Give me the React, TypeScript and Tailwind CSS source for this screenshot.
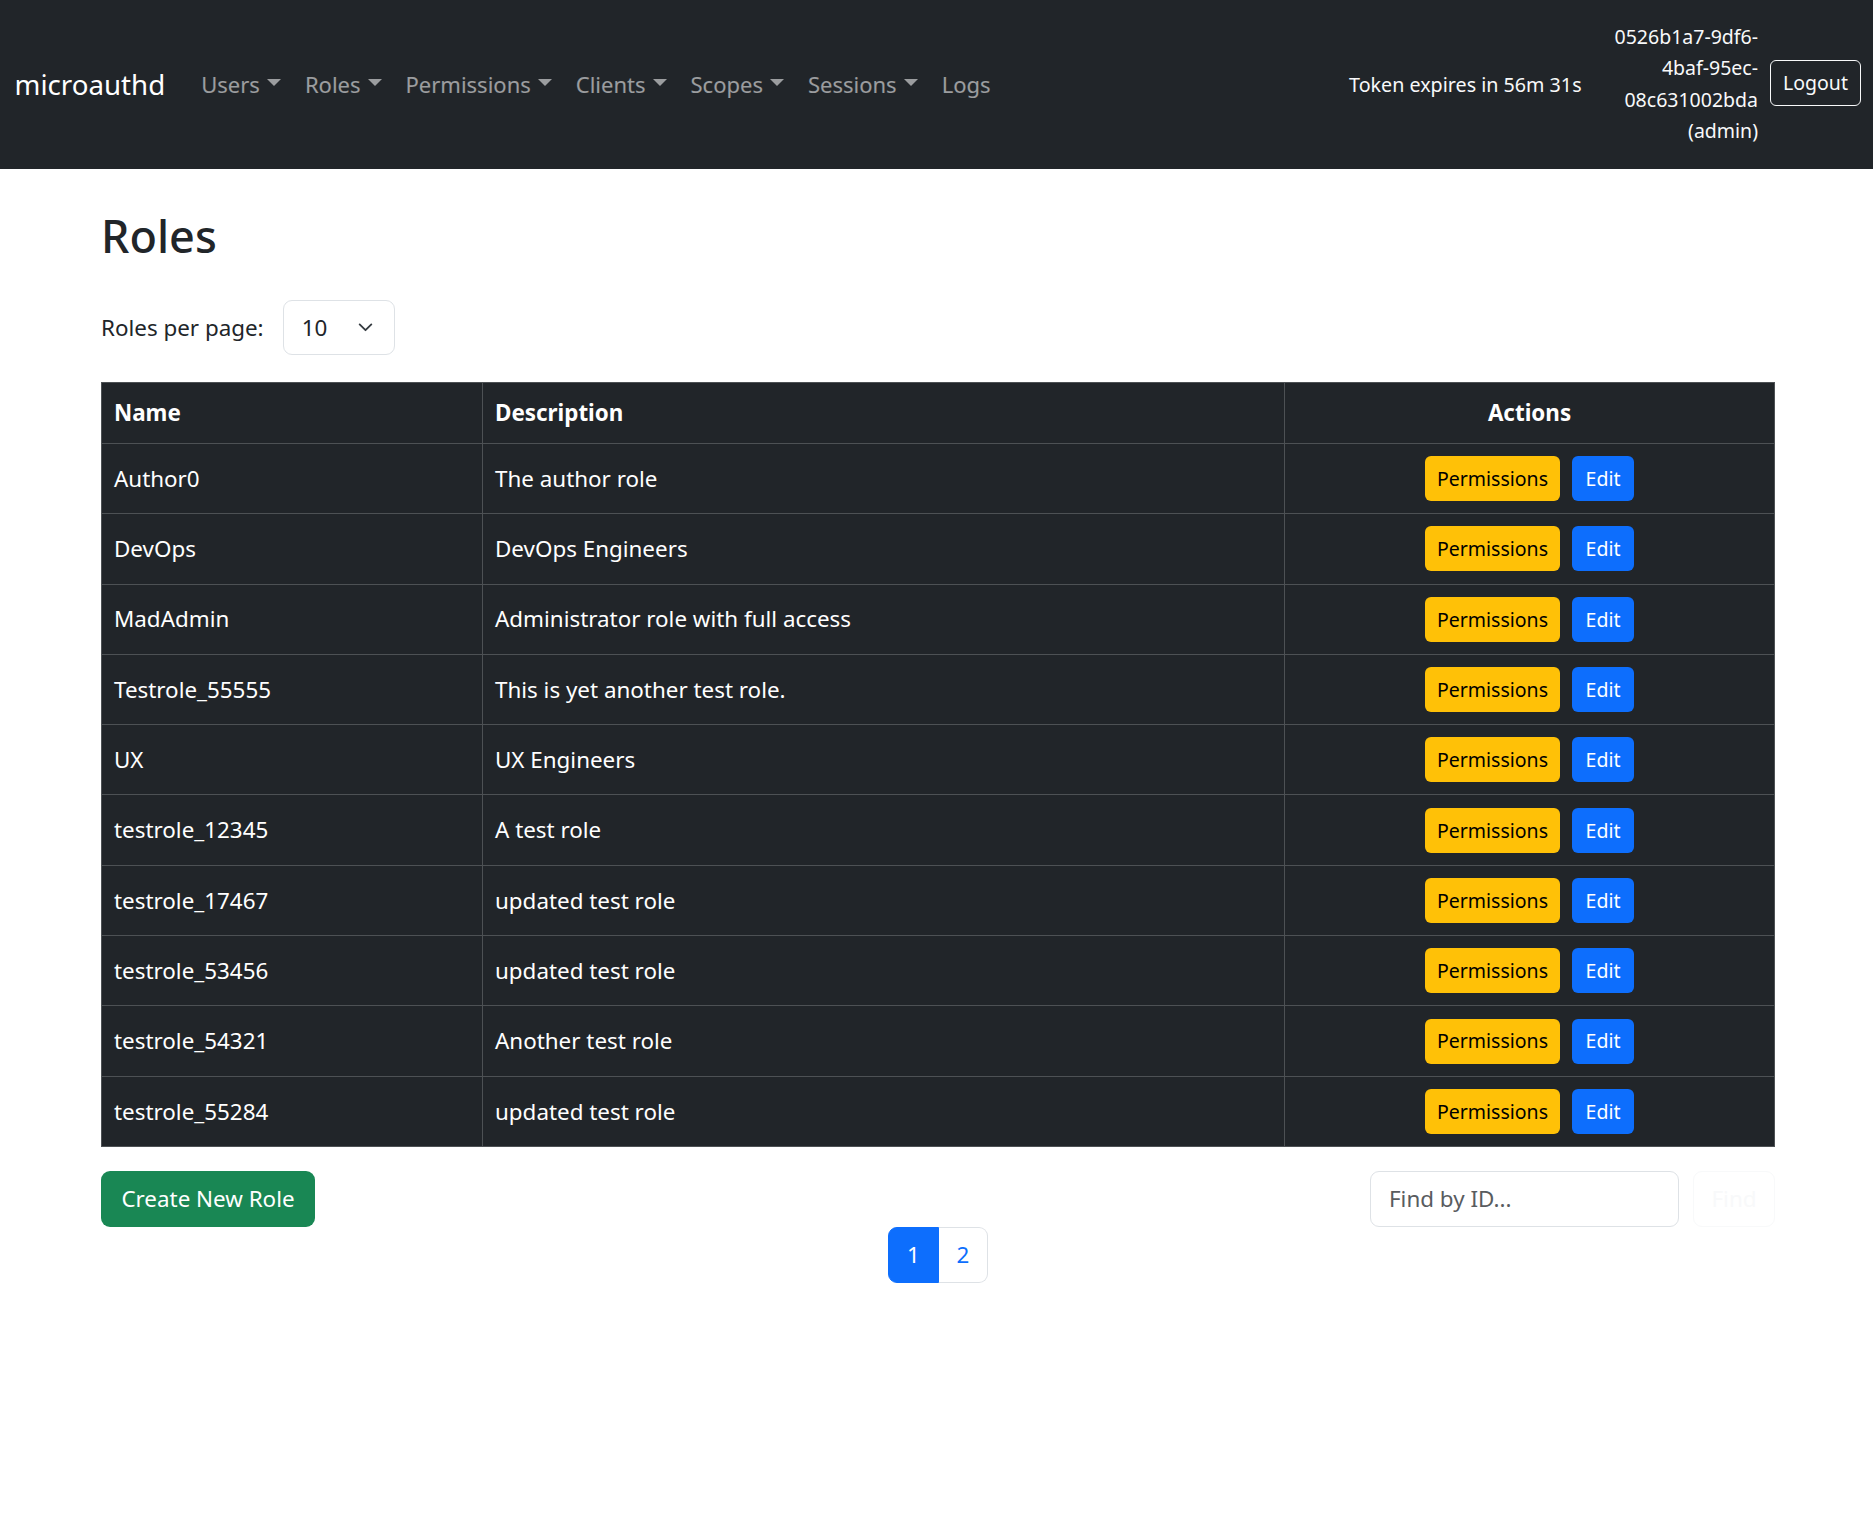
import React from "react";

const roles = [
  { name: "Author0", description: "The author role" },
  { name: "DevOps", description: "DevOps Engineers" },
  { name: "MadAdmin", description: "Administrator role with full access" },
  { name: "Testrole_55555", description: "This is yet another test role." },
  { name: "UX", description: "UX Engineers" },
  { name: "testrole_12345", description: "A test role" },
  { name: "testrole_17467", description: "updated test role" },
  { name: "testrole_53456", description: "updated test role" },
  { name: "testrole_54321", description: "Another test role" },
  { name: "testrole_55284", description: "updated test role" },
];

const navItems = [
  { label: "Users", caret: true },
  { label: "Roles", caret: true },
  { label: "Permissions", caret: true },
  { label: "Clients", caret: true },
  { label: "Scopes", caret: true },
  { label: "Sessions", caret: true },
  { label: "Logs", caret: false },
];

function Caret() {
  return (
    <span className="ml-[7px] mb-[5px] inline-block h-0 w-0 border-x-[7px] border-t-[7px] border-x-transparent border-t-current" />
  );
}

function Navbar() {
  return (
    <nav className="flex h-[169px] items-center bg-[#212529] pr-3 pl-[14.5px]">
      <a className="mr-6 text-[27.7px] leading-[1.5] text-white">microauthd</a>
      <ul className="flex items-center">
        {navItems.map((item) => (
          <li key={item.label}>
            <a className="flex items-center px-3 text-[22px] leading-[1.5] text-white/55">
              {item.label}
              {item.caret && <Caret />}
            </a>
          </li>
        ))}
      </ul>

      <div className="ml-auto flex items-center">
        <span className="mr-[33px] text-[19.7px] text-[#f8f9fa]">Token expires in 56m 31s</span>
        <div className="-mt-[2px] text-right text-[19.5px] leading-[31.5px] text-[#f8f9fa]">
          <div>0526b1a7-9df6-</div>
          <div>4baf-95ec-</div>
          <div>08c631002bda</div>
          <div>(admin)</div>
        </div>
        <button className="ml-3 -mt-[3px] h-[46px] w-[91px] rounded-[6px] border border-[#f8f9fa] text-[19.5px] text-[#f8f9fa]">
          Logout
        </button>
      </div>
    </nav>
  );
}

function RolesTable() {
  return (
    <table className="w-full table-fixed border-collapse bg-[#212529] text-[22.4px] text-white">
      <colgroup>
        <col className="w-[381px]" />
        <col className="w-[802px]" />
        <col />
      </colgroup>
      <thead>
        <tr className="h-[61px]">
          <th className="border border-[#4d5154] px-3 text-left font-bold">Name</th>
          <th className="border border-[#4d5154] px-3 text-left font-bold">Description</th>
          <th className="border border-[#4d5154] px-3 text-center font-bold">Actions</th>
        </tr>
      </thead>
      <tbody>
        {roles.map((role) => (
          <tr key={role.name} className="h-[70.3px]">
            <td className="border border-[#4d5154] px-3 align-middle">{role.name}</td>
            <td className="border border-[#4d5154] px-3 align-middle">{role.description}</td>
            <td className="border border-[#4d5154] px-3 align-middle">
              <div className="flex justify-center gap-3">
                <button className="h-[45px] w-[135px] rounded-[6px] bg-[#ffc107] text-[19.5px] text-black">
                  Permissions
                </button>
                <button className="h-[45px] w-[62px] rounded-[6px] bg-[#0d6efd] text-[19.5px] text-white">
                  Edit
                </button>
              </div>
            </td>
          </tr>
        ))}
      </tbody>
    </table>
  );
}

export default function App() {
  return (
    <div className="min-h-screen bg-white font-['Noto_Sans',sans-serif] text-[#212529]">
      <Navbar />

      <main className="ml-[101px] w-[1674px]">
        <h1 className="mt-[40px] mb-[37px] text-[45px] leading-[1.2] font-medium">Roles</h1>

        <div className="flex items-center gap-[19px]">
          <label className="text-[22.4px]">Roles per page:</label>
          <div className="flex h-[55px] w-[112px] items-center justify-between rounded-[9px] border border-[#dee2e6] pr-[21px] pl-[18px] text-[22.4px]">
            <span>10</span>
            <svg width="15" height="9" viewBox="0 0 16 10" fill="none">
              <path d="M1.5 1.5 L8 8 L14.5 1.5" stroke="#343a40" strokeWidth="2" strokeLinecap="round" strokeLinejoin="round" />
            </svg>
          </div>
        </div>

        <div className="mt-[27px]">
          <RolesTable />
        </div>

        <div className="mt-[24px] flex items-start justify-between">
          <button className="h-[56px] w-[214px] rounded-[9px] bg-[#198754] text-[22.4px] text-white">
            Create New Role
          </button>
          <div className="flex gap-[14px]">
            <input
              placeholder="Find by ID..."
              className="h-[56px] w-[309px] rounded-[9px] border border-[#dee2e6] px-[18px] text-[22.4px] placeholder:text-[#595c5f]"
            />
            <button className="h-[56px] w-[82px] rounded-[9px] border border-[#f8f9fa] text-[22.4px] text-[#f8f9fa]">
              Find
            </button>
          </div>
        </div>

        <div className="flex justify-center">
          <a className="flex h-[56px] w-[51px] items-center justify-center rounded-l-[9px] border border-[#0d6efd] bg-[#0d6efd] text-[22.4px] text-white">
            1
          </a>
          <a className="flex h-[56px] w-[49px] items-center justify-center rounded-r-[9px] border border-l-0 border-[#dee2e6] text-[22.4px] text-[#0d6efd]">
            2
          </a>
        </div>
      </main>
    </div>
  );
}
